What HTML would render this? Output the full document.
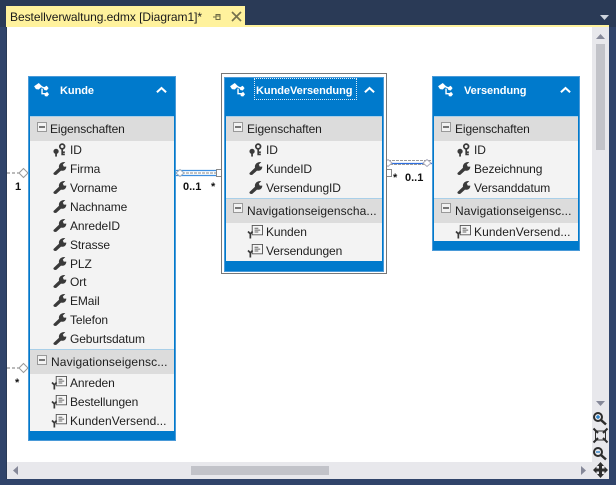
<!DOCTYPE html>
<html><head><meta charset="utf-8">
<style>
html,body{margin:0;padding:0;width:616px;height:485px;overflow:hidden;background:#2a3a56;font-family:"Liberation Sans",sans-serif}
div{position:absolute;box-sizing:border-box}
.t{font-size:12px;color:#1e1e1e;white-space:nowrap;letter-spacing:-.1px;line-height:16px;height:16px}
.b{font-size:11px;font-weight:bold;color:#fff;white-space:nowrap;line-height:16px;height:16px;letter-spacing:-.05px}
.m{font-size:11px;font-weight:bold;color:#111;white-space:nowrap;line-height:14px}
.e{background:#f3f3f3;border:1px solid #4a9ad8;}
.in{background:#007acc}
.s{background:#dcdcdc;border-top:1px solid #a9cfe8}
svg{position:absolute;overflow:visible}
</style></head><body>
<svg width="0" height="0" style="position:absolute">
<defs>
<symbol id="w" viewBox="0 0 14 14"><path d="M0.500 12L6 6.800C5.300 3.600 7.800 .6 12.300 1L9.800 3.600 10.800 5.600 13.300 5.600C13.300 8.800 10.600 10.400 8 9.600L3.400 13.800C1.800 14.400 0 13.400 .5 12Z" fill="#3a3a3a"/></symbol>
<symbol id="k" viewBox="0 0 16 16"><circle cx="10.500" cy="4" r="2.700" fill="none" stroke="#3a3a3a" stroke-width="2"/><path d="M10.500 6.500V14M10.500 10.500H13.500M10.500 13H13.500" stroke="#3a3a3a" stroke-width="1.900" fill="none"/><circle cx="3.500" cy="9.500" r="3" fill="#3a3a3a"/><path d="M3.500 11V15.500" stroke="#3a3a3a" stroke-width="2"/></symbol>
<symbol id="n" viewBox="0 0 18 16"><path d="M5.500 1.500H16.500V11.500H5.500Z" fill="#f6f6f6" stroke="#555" stroke-width="1"/><path d="M8 4.500H12M8 6.500H14M8 8.500H12" stroke="#666" stroke-width="1"/><path d="M1 8L3.500 10.500M3.500 10.500L6 8M3.500 10.500V15.500" stroke="#3a3a3a" stroke-width="1.800" fill="none"/></symbol>
<symbol id="h" viewBox="0 0 18 15"><path d="M0 3.500L5 0 8.500 3.500 5 7 2 6.500Z" fill="#fff"/><path d="M6 3L11 5.500M8.500 6V11.500H12" stroke="#fff" stroke-width="1.500" fill="none"/><path d="M10 5L13.500 3 15.500 5.500 13.500 8 11 7.500Z" fill="#fff"/><path d="M11 11.500L14 9.500 16 12 14 14.500 11.500 14Z" fill="#fff"/></symbol>
<symbol id="c" viewBox="0 0 12 8"><path d="M1 6.500L6 1.800 11 6.500" stroke="#fff" stroke-width="2.200" fill="none"/></symbol>
<symbol id="x" viewBox="0 0 10 10"><rect x=".5" y=".5" width="9" height="9" fill="#f2f2f2" stroke="#999" stroke-width="1"/><path d="M2 5H8" stroke="#333" stroke-width="1.300"/></symbol>
</defs>
</svg>

<!-- frame -->
<div style="left:0;top:27px;width:6px;height:458px;background:#30446a"></div>
<div style="left:609px;top:27px;width:7px;height:458px;background:#30446a"></div>
<div style="left:0;top:479px;width:616px;height:6px;background:#30446a"></div>

<!-- tab -->
<div style="left:6px;top:6px;width:239px;height:20px;background:#fff29d"></div>
<div style="left:6px;top:25px;width:603px;height:2px;background:#fff29d"></div>
<div class="t" style="left:10px;top:9px;color:#1a1a1a;letter-spacing:-.04px">Bestellverwaltung.edmx [Diagram1]*</div>
<svg style="left:212px;top:12px" width="10" height="10"><path d="M1 5H4M4 2.500V7.500H8V2.500ZM4 4H8" stroke="#6d6a45" stroke-width="1" fill="none"/></svg>
<svg style="left:231px;top:11px" width="11" height="11"><path d="M1 1L10 10M10 1L1 10" stroke="#76724c" stroke-width="1.700"/></svg>
<svg style="left:600px;top:15px" width="9" height="6"><path d="M0 0H9L4.500 5Z" fill="#ced4dd"/></svg>

<!-- content -->
<div style="left:7px;top:27px;width:585px;height:435px;background:#fff"></div>
<div style="left:592px;top:27px;width:17px;height:452px;background:#e8e8ec"></div>
<div style="left:596px;top:44px;width:9px;height:106px;background:#c2c3c9"></div>
<svg style="left:596px;top:34px" width="9" height="5"><path d="M0 5L4.500 0 9 5Z" fill="#868999"/></svg>
<svg style="left:596px;top:401px" width="9" height="5"><path d="M0 0L4.500 5 9 0Z" fill="#868999"/></svg>
<div style="left:7px;top:462px;width:585px;height:17px;background:#e8e8ec"></div>
<div style="left:191px;top:466px;width:138px;height:9px;background:#c2c3c9"></div>
<svg style="left:13px;top:466px" width="5" height="9"><path d="M5 0L0 4.500 5 9Z" fill="#868999"/></svg>
<svg style="left:581px;top:466px" width="5" height="9"><path d="M0 0L5 4.500 0 9Z" fill="#868999"/></svg>

<!-- zoom tools -->
<svg style="left:592px;top:410px" width="17" height="68">
<g fill="none" stroke="#2d2d2d">
<circle cx="6" cy="7" r="4" stroke-width="2"/><path d="M9 10L14 14.500" stroke-width="2.500"/>
<path d="M3.500 21H13.500V30H3.500Z" stroke-width="1"/><path d="M1.500 18.500L6 23M15.500 18.500L11 23M1.500 32.500L6 28M15.500 32.500L11 28" stroke-width="2"/>
<circle cx="6" cy="42" r="4" stroke-width="2"/><path d="M9 45L14 49.500" stroke-width="2.500"/>
</g>
<path d="M4 7H8M6 5V9" stroke="#0e70c0" stroke-width="1.200"/>
<path d="M4 42H8" stroke="#0e70c0" stroke-width="1.200"/>
<path d="M8.500 52L12 56H10V58.500H12.500V56.500L16 60 12.500 63.500V61.500H10V64H12L8.500 68 5 64H7V61.500H4.500V63.500L1 60 4.500 56.500V58.500H7V56H5Z" fill="#2d2d2d"/>
</svg>

<!-- connectors -->
<svg style="left:0;top:0" width="616" height="485">
<path d="M7 173H20M7 368H20" stroke="#777" stroke-width="1" stroke-dasharray="3 2" fill="none"/>
<path d="M19 173L23.500 168.500 28 173 23.500 177.500Z M19 368L23.500 363.500 28 368 23.500 372.500Z" fill="#fff" stroke="#999"/>
<path d="M176 170.500H221M176 175.500H221" stroke="#3f8fe0" stroke-width="1.300"/>
<path d="M182 173H216" stroke="#888" stroke-dasharray="3 1"/>
<path d="M176 173L180 169.500 184 173 180 176.500Z" fill="#fff" stroke="#9ab"/>
<rect x="216.500" y="169.500" width="7" height="7" fill="#fff" stroke="#888"/>
<path d="M384 163.500H432" stroke="#2f6fe0" stroke-width="1.200"/>
<path d="M384 160.500H432M390 164.500H425" stroke="#999" stroke-width="1" stroke-dasharray="3 1"/>
<path d="M384 163L388 159.500 392 163 388 166.500Z M423 163L427 159.500 431 163 427 166.500Z" fill="#fff" stroke="#aab"/>
<path d="M385 163V173" stroke="#888" stroke-width="1"/>
<rect x="384.500" y="169.500" width="7" height="7" fill="#fff" stroke="#888"/>
</svg>
<div class="m" style="left:15px;top:180px">1</div>
<div class="m" style="left:183px;top:180px">0..1</div>
<div class="m" style="left:211px;top:180px">*</div>
<div class="m" style="left:15px;top:376px">*</div>
<div class="m" style="left:393px;top:171px">*</div>
<div class="m" style="left:405px;top:171px">0..1</div>

<!-- Kunde -->
<div class="e" style="left:28px;top:76px;width:148px;height:365px"></div>
<div class="in" style="left:29px;top:77px;width:146px;height:39px"></div>
<div class="in" style="left:29px;top:431px;width:146px;height:9px"></div>
<div class="in" style="left:29px;top:77px;width:1px;height:363px"></div>
<div class="in" style="left:174px;top:77px;width:1px;height:363px"></div>
<svg style="left:34px;top:83px" width="17" height="14"><use href="#h"/></svg>
<div class="b" style="left:60px;top:83px">Kunde</div>
<svg style="left:156px;top:86px" width="11" height="8"><use href="#c"/></svg>
<div class="s" style="left:30px;top:116px;width:144px;height:25px"></div>
<svg style="left:37px;top:122px" width="10" height="10"><use href="#x"/></svg>
<div class="t" style="left:50px;top:121px">Eigenschaften</div>
<svg style="left:53px;top:143px" width="14" height="14"><use href="#k"/></svg><div class="t" style="left:70px;top:142px">ID</div>
<svg style="left:53px;top:161px" width="14" height="14"><use href="#w"/></svg><div class="t" style="left:70px;top:161px">Firma</div>
<svg style="left:53px;top:180px" width="14" height="14"><use href="#w"/></svg><div class="t" style="left:70px;top:180px">Vorname</div>
<svg style="left:53px;top:199px" width="14" height="14"><use href="#w"/></svg><div class="t" style="left:70px;top:199px">Nachname</div>
<svg style="left:53px;top:218px" width="14" height="14"><use href="#w"/></svg><div class="t" style="left:70px;top:218px">AnredeID</div>
<svg style="left:53px;top:237px" width="14" height="14"><use href="#w"/></svg><div class="t" style="left:70px;top:237px">Strasse</div>
<svg style="left:53px;top:256px" width="14" height="14"><use href="#w"/></svg><div class="t" style="left:70px;top:256px">PLZ</div>
<svg style="left:53px;top:274px" width="14" height="14"><use href="#w"/></svg><div class="t" style="left:70px;top:274px">Ort</div>
<svg style="left:53px;top:293px" width="14" height="14"><use href="#w"/></svg><div class="t" style="left:70px;top:293px">EMail</div>
<svg style="left:53px;top:312px" width="14" height="14"><use href="#w"/></svg><div class="t" style="left:70px;top:312px">Telefon</div>
<svg style="left:53px;top:331px" width="14" height="14"><use href="#w"/></svg><div class="t" style="left:70px;top:331px">Geburtsdatum</div>
<div class="s" style="left:30px;top:349px;width:144px;height:25px"></div>
<svg style="left:37px;top:355px" width="10" height="10"><use href="#x"/></svg>
<div class="t" style="left:51px;top:354px;letter-spacing:.12px">Navigationseigensc...</div>
<svg style="left:51px;top:375px" width="17" height="15"><use href="#n"/></svg><div class="t" style="left:70px;top:375px">Anreden</div>
<svg style="left:51px;top:394px" width="17" height="15"><use href="#n"/></svg><div class="t" style="left:70px;top:394px">Bestellungen</div>
<svg style="left:51px;top:413px" width="17" height="15"><use href="#n"/></svg><div class="t" style="left:70px;top:413px;letter-spacing:.07px">KundenVersend...</div>

<!-- KundeVersendung -->
<div style="left:221px;top:73px;width:166px;height:201px;border:1px solid #777;background:#fff"></div>
<div class="e" style="left:224px;top:77px;width:160px;height:195px"></div>
<div class="in" style="left:225px;top:78px;width:158px;height:38px"></div>
<div class="in" style="left:225px;top:261px;width:158px;height:10px"></div>
<div class="in" style="left:225px;top:78px;width:1px;height:193px"></div>
<div class="in" style="left:382px;top:78px;width:1px;height:193px"></div>
<svg style="left:230px;top:83px" width="17" height="14"><use href="#h"/></svg>
<div style="left:254px;top:78px;width:103px;height:22px;border:1px dotted #dfeaf5"></div>
<div class="b" style="left:256px;top:83px">KundeVersendung</div>
<svg style="left:364px;top:86px" width="11" height="8"><use href="#c"/></svg>
<div class="s" style="left:226px;top:116px;width:156px;height:25px"></div>
<svg style="left:233px;top:122px" width="10" height="10"><use href="#x"/></svg>
<div class="t" style="left:247px;top:121px">Eigenschaften</div>
<svg style="left:249px;top:143px" width="14" height="14"><use href="#k"/></svg><div class="t" style="left:266px;top:142px">ID</div>
<svg style="left:249px;top:161px" width="14" height="14"><use href="#w"/></svg><div class="t" style="left:266px;top:161px">KundeID</div>
<svg style="left:249px;top:180px" width="14" height="14"><use href="#w"/></svg><div class="t" style="left:266px;top:180px">VersendungID</div>
<div class="s" style="left:226px;top:198px;width:156px;height:25px"></div>
<svg style="left:233px;top:203px" width="10" height="10"><use href="#x"/></svg>
<div class="t" style="left:247px;top:203px;letter-spacing:.1px">Navigationseigenscha...</div>
<svg style="left:247px;top:224px" width="17" height="15"><use href="#n"/></svg><div class="t" style="left:266px;top:224px">Kunden</div>
<svg style="left:247px;top:243px" width="17" height="15"><use href="#n"/></svg><div class="t" style="left:266px;top:243px">Versendungen</div>

<!-- Versendung -->
<div class="e" style="left:432px;top:76px;width:148px;height:175px"></div>
<div class="in" style="left:433px;top:77px;width:146px;height:39px"></div>
<div class="in" style="left:433px;top:241px;width:146px;height:9px"></div>
<div class="in" style="left:433px;top:77px;width:1px;height:173px"></div>
<div class="in" style="left:578px;top:77px;width:1px;height:173px"></div>
<svg style="left:438px;top:83px" width="17" height="14"><use href="#h"/></svg>
<div class="b" style="left:464px;top:83px">Versendung</div>
<svg style="left:560px;top:86px" width="11" height="8"><use href="#c"/></svg>
<div class="s" style="left:434px;top:116px;width:144px;height:25px"></div>
<svg style="left:441px;top:122px" width="10" height="10"><use href="#x"/></svg>
<div class="t" style="left:455px;top:121px">Eigenschaften</div>
<svg style="left:457px;top:143px" width="14" height="14"><use href="#k"/></svg><div class="t" style="left:474px;top:142px">ID</div>
<svg style="left:457px;top:161px" width="14" height="14"><use href="#w"/></svg><div class="t" style="left:474px;top:161px">Bezeichnung</div>
<svg style="left:457px;top:180px" width="14" height="14"><use href="#w"/></svg><div class="t" style="left:474px;top:180px">Versanddatum</div>
<div class="s" style="left:434px;top:198px;width:144px;height:25px"></div>
<svg style="left:441px;top:203px" width="10" height="10"><use href="#x"/></svg>
<div class="t" style="left:455px;top:203px;letter-spacing:.12px">Navigationseigensc...</div>
<svg style="left:455px;top:224px" width="17" height="15"><use href="#n"/></svg><div class="t" style="left:474px;top:224px;letter-spacing:.07px">KundenVersend...</div>
</body></html>
